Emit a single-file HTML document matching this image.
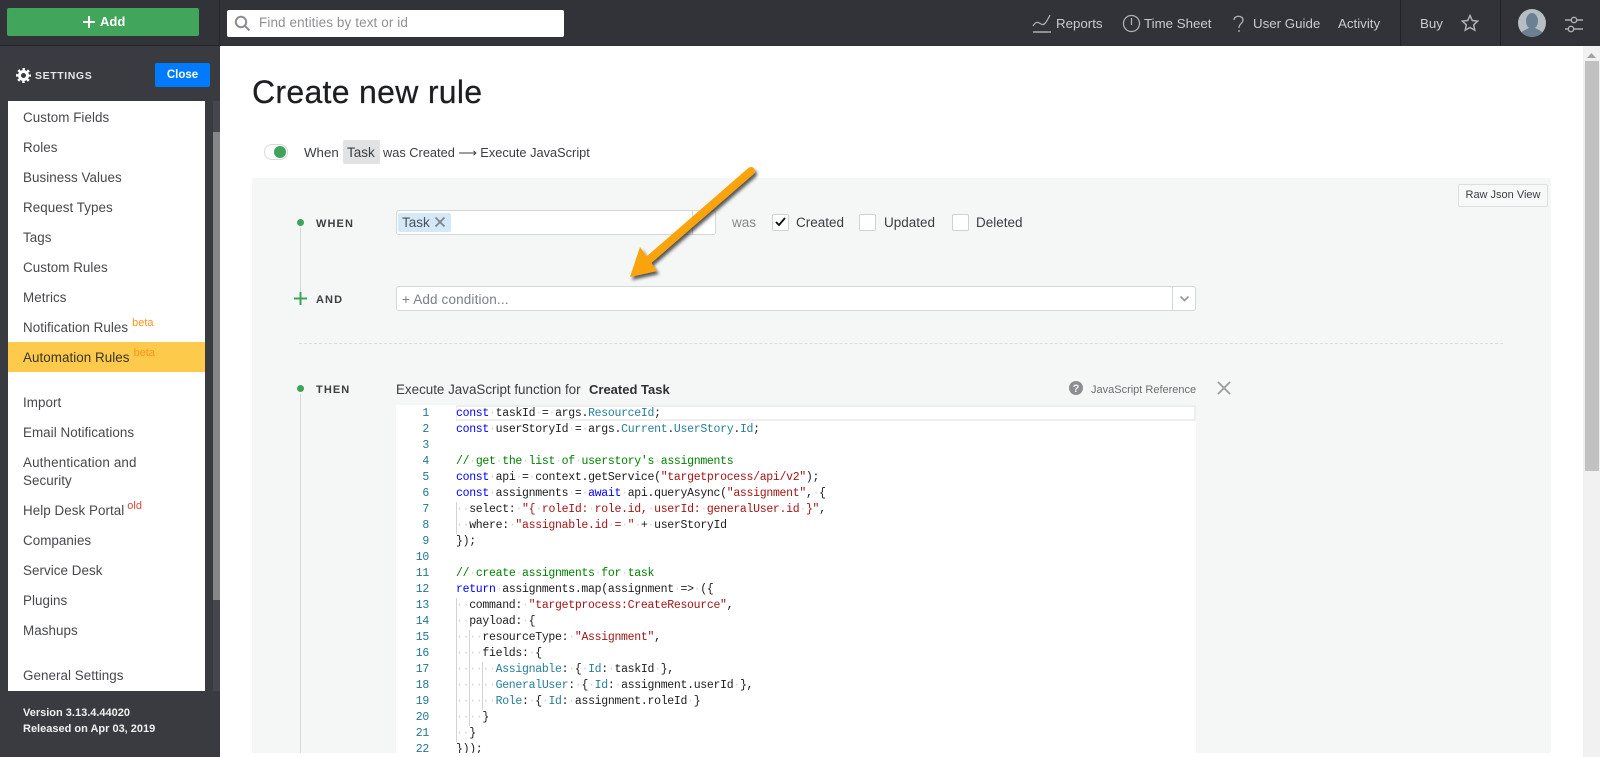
<!DOCTYPE html>
<html><head><meta charset="utf-8"><title>Create new rule</title>
<style>
html,body{margin:0;padding:0;width:1600px;height:757px;overflow:hidden;background:#fff}
body{position:relative;font-family:"Liberation Sans",sans-serif;font-size:13.5px;color:#3b3d42}
.a{position:absolute}
.t{position:absolute;white-space:nowrap;line-height:18px;height:18px}
.nav{color:#c9cbcf;font-size:13.3px}
.m{color:#46484c;left:23px;font-size:13.4px;letter-spacing:.05px}
.m sup{font-size:11px;color:#f7941d;position:relative;top:-6px;vertical-align:baseline;margin-left:4px;letter-spacing:0}
.lbl{font-size:11px;font-weight:bold;letter-spacing:1.1px;color:#3c3e42}
.in{position:absolute;background:#fff;border:1px solid #d5d8d9;border-radius:3px;box-sizing:border-box}
.cb{position:absolute;width:17px;height:17px;box-sizing:border-box;background:#fff;border:1px solid #cfd2d3;border-radius:2px}
#code{position:absolute;left:396px;top:405px;width:800px;height:348px;background:#fff;overflow:hidden;font-family:"Liberation Mono",monospace;font-size:11.5px;letter-spacing:-.3px;line-height:16px;color:#1c1c1c}
#code .n{position:absolute;left:0;width:33px;text-align:right;color:#237893;height:16px;margin-top:1px}
#code .l{position:absolute;left:60px;white-space:pre;height:16px;margin-top:1px}
#code i{font-style:normal;color:#d2d2d2}
.k{color:#0000ff}.s{color:#a31515}.c{color:#008000}.p{color:#267f99}
.g{position:absolute;width:1px;background:#d3d3d3}
</style></head><body>

<div class="a" style="left:0;top:0;width:1600px;height:46px;background:#313338"></div>
<div class="a" style="left:0;top:46px;width:220px;height:711px;background:#3a3b40"></div>
<div class="a" style="left:219px;top:0;width:1px;height:46px;background:#25262a"></div>
<div class="a" style="left:0;top:45px;width:220px;height:1px;background:#25262a"></div>

<div class="a" style="left:7px;top:8px;width:192px;height:28px;background:#41a55c;border-radius:2px"></div>
<svg class="a" style="left:82px;top:15px" width="14" height="14"><path d="M7 1v12M1 7h12" stroke="#fff" stroke-width="2"/></svg>
<div class="t" style="left:100px;top:13px;color:#fff;font-weight:bold;font-size:13px">Add</div>

<div class="a" style="left:227px;top:10px;width:337px;height:27px;background:#fff;border-radius:2px"></div>
<svg class="a" style="left:234px;top:15px" width="17" height="17" fill="none" stroke="#8b8d90" stroke-width="2"><circle cx="7" cy="7" r="5.2"/><path d="M11 11l4.500 4.500"/></svg>
<div class="t" style="left:259px;top:14px;color:#8e9094;font-size:13.5px;letter-spacing:.1px">Find entities by text or id</div>

<svg class="a" style="left:1032px;top:14px" width="20" height="20" fill="none" stroke="#aeb0b4" stroke-width="1.300"><path d="M1 12c3-5 5-4 8-2s5-1 9-9"/><path d="M1 18h18" stroke-width="1.600"/></svg>
<div class="t nav" style="left:1056px;top:15px">Reports</div>
<svg class="a" style="left:1122px;top:14px" width="19" height="19" fill="none" stroke="#aeb0b4" stroke-width="1.300"><circle cx="9.500" cy="9.500" r="8"/><path d="M9.500 4v7"/></svg>
<div class="t nav" style="left:1144px;top:15px">Time Sheet</div>
<svg class="a" style="left:1233px;top:15px" width="12" height="20" fill="none" stroke="#aeb0b4" stroke-width="1.300"><path d="M1 5c0-5 9-5 9 0 0 3.500-4 3.500-4 8"/><path d="M6 15v2"/></svg>
<div class="t nav" style="left:1253px;top:15px">User Guide</div>
<div class="t nav" style="left:1338px;top:15px">Activity</div>
<div class="a" style="left:1400px;top:0;width:1px;height:46px;background:#222327"></div>
<div class="t nav" style="left:1420px;top:15px">Buy</div>
<svg class="a" style="left:1461px;top:14px" width="18" height="18" fill="none" stroke="#aeb0b4" stroke-width="1.500"><path d="M9 1.500l2.300 5 5.400.6-4 3.700 1.100 5.400L9 13.500l-4.800 2.700 1.100-5.400-4-3.700 5.400-.6z"/></svg>
<div class="a" style="left:1500px;top:0;width:1px;height:46px;background:#222327"></div>
<svg class="a" style="left:1518px;top:9px" width="28" height="28"><defs><clipPath id="av"><circle cx="14" cy="14" r="14"/></clipPath></defs><circle cx="14" cy="14" r="14" fill="#b6bdc3"/><g clip-path="url(#av)" fill="#6b8193"><ellipse cx="14" cy="12" rx="6" ry="8"/><path d="M1 28c1-5 6-7 10-9h6c4 2 9 4 10 9z"/></g></svg>
<svg class="a" style="left:1565px;top:14px" width="18" height="20" fill="none" stroke="#aeb0b4" stroke-width="1.400"><path d="M0 6h6M12 6h6M0 15h3M9 15h9"/><circle cx="9" cy="6" r="2.700"/><circle cx="6" cy="15" r="2.700"/></svg>

<svg class="a" style="left:16px;top:68px" width="15" height="15" viewBox="0 0 15 15" fill="none" stroke="#fff"><circle cx="7.500" cy="7.500" r="4" stroke-width="3"/><circle cx="7.500" cy="7.500" r="6.200" stroke-width="2.600" stroke-dasharray="2.400 2.470" stroke-dashoffset="1.200"/></svg>
<div class="t" style="left:35px;top:67px;color:#e4e5e7;font-size:10.5px;font-weight:bold;letter-spacing:.6px">SETTINGS</div>
<div class="a" style="left:155px;top:63px;width:55px;height:24px;background:#007bff;border-radius:2px;color:#fff;font-size:11.5px;font-weight:bold;text-align:center;line-height:24px">Close</div>

<div class="a" style="left:8px;top:101px;width:197px;height:590px;background:#fff"></div>
<div class="a" style="left:8px;top:342px;width:197px;height:30px;background:#fdca4b"></div>
<div class="a" style="left:213px;top:101px;width:7px;height:590px;background:#46474c"></div>
<div class="a" style="left:213px;top:132px;width:7px;height:468px;background:#868688"></div>

<div class="t m" style="top:109px">Custom Fields</div>
<div class="t m" style="top:139px">Roles</div>
<div class="t m" style="top:169px">Business Values</div>
<div class="t m" style="top:199px">Request Types</div>
<div class="t m" style="top:229px">Tags</div>
<div class="t m" style="top:259px">Custom Rules</div>
<div class="t m" style="top:289px">Metrics</div>
<div class="t m" style="top:319px">Notification Rules<sup>beta</sup></div>
<div class="t m" style="top:349px;color:#3a3520">Automation Rules<sup>beta</sup></div>
<div class="t m" style="top:394px">Import</div>
<div class="t m" style="top:424px">Email Notifications</div>
<div class="t m" style="top:454px;letter-spacing:.15px">Authentication and</div>
<div class="t m" style="top:472px">Security</div>
<div class="t m" style="top:502px">Help Desk Portal<sup style="color:#e0453a;margin-left:3px">old</sup></div>
<div class="t m" style="top:532px">Companies</div>
<div class="t m" style="top:562px">Service Desk</div>
<div class="t m" style="top:592px">Plugins</div>
<div class="t m" style="top:622px">Mashups</div>
<div class="t m" style="top:667px">General Settings</div>
<div class="t" style="left:23px;top:704px;color:#f0f0f1;font-size:11px;font-weight:bold">Version 3.13.4.44020</div>
<div class="t" style="left:23px;top:720px;color:#f0f0f1;font-size:11px;font-weight:bold">Released on Apr 03, 2019</div>

<div class="t" style="left:252px;top:72px;height:40px;line-height:40px;font-size:32px;color:#1d1e21;letter-spacing:.3px;-webkit-text-stroke:.25px #1d1e21">Create new rule</div>

<div class="a" style="left:264px;top:144px;width:24px;height:16px;box-sizing:border-box;background:#fff;border:1px solid #d8dadb;border-radius:8px"></div>
<div class="a" style="left:274px;top:146px;width:12px;height:12px;border-radius:50%;background:#3ea558"></div>
<div class="t" style="left:304px;top:144px;font-size:13.3px">When</div>
<div class="a" style="left:343px;top:140px;width:37px;height:24px;background:#e1e2e4;border-radius:2px"></div>
<div class="t" style="left:347px;top:144px">Task</div>
<div class="t" style="left:383px;top:144px;font-size:12.8px">was Created ⟶ Execute JavaScript</div>

<div class="a" style="left:252px;top:178px;width:1299px;height:575px;background:#f5f7f6;border-radius:2px"></div>
<div class="a" style="left:1458px;top:184px;width:90px;height:23px;box-sizing:border-box;border:1px solid #dcdfdf;background:#f7f8f8;border-radius:2px;font-size:11px;text-align:center;line-height:21px;color:#3b3d42">Raw Json View</div>

<div class="a" style="left:300px;top:228px;width:1px;height:64px;background:#d6d8d8"></div>
<div class="a" style="left:297px;top:219px;width:7px;height:7px;border-radius:50%;background:#3ea558"></div>
<div class="t lbl" style="left:316px;top:215px">WHEN</div>
<div class="in" style="left:396px;top:210px;width:320px;height:25px"></div>
<div class="a" style="left:692px;top:211px;width:1px;height:23px;background:#d5d8d9"></div>
<div class="a" style="left:398px;top:213px;width:53px;height:19px;background:#d3e9f8;border-radius:2px"></div>
<div class="t" style="left:402px;top:214px;color:#4d5157">Task</div>
<svg class="a" style="left:434px;top:216px" width="12" height="12" stroke="#7f8488" stroke-width="1.800"><path d="M1.500 1.500l9 9M10.500 1.500l-9 9"/></svg>
<div class="t" style="left:732px;top:214px;color:#85888b">was</div>
<div class="cb" style="left:772px;top:214px"></div>
<svg class="a" style="left:775px;top:217px" width="12" height="10" fill="none" stroke="#111" stroke-width="1.800"><path d="M1 5l3 3 6-7"/></svg>
<div class="t" style="left:796px;top:214px">Created</div>
<div class="cb" style="left:859px;top:214px"></div>
<div class="t" style="left:884px;top:214px">Updated</div>
<div class="cb" style="left:952px;top:214px"></div>
<div class="t" style="left:976px;top:214px">Deleted</div>

<svg class="a" style="left:294px;top:292px" width="13" height="13" stroke="#3ea558" stroke-width="2"><path d="M6.500 0v13M0 6.500h13"/></svg>
<div class="t lbl" style="left:316px;top:291px">AND</div>
<div class="in" style="left:396px;top:286px;width:800px;height:25px"></div>
<div class="a" style="left:1172px;top:287px;width:1px;height:23px;background:#d5d8d9"></div>
<svg class="a" style="left:1179px;top:295px" width="11" height="8" fill="none" stroke="#9a9da0" stroke-width="1.800"><path d="M1.500 1.500l4 4 4-4"/></svg>
<div class="t" style="left:402px;top:291px;color:#7d8084;letter-spacing:.15px">+ Add condition...</div>

<div class="a" style="left:299px;top:343px;width:1204px;height:0;border-top:1px dashed #dcdedd"></div>

<div class="a" style="left:300px;top:394px;width:1px;height:359px;background:#d6d8d8"></div>
<div class="a" style="left:297px;top:385px;width:7px;height:7px;border-radius:50%;background:#3ea558"></div>
<div class="t lbl" style="left:316px;top:381px">THEN</div>
<div class="t" style="left:396px;top:381px;font-size:13.4px">Execute JavaScript function for</div>
<div class="t" style="left:589px;top:381px;font-weight:bold;color:#2f3135;font-size:13px">Created Task</div>
<svg class="a" style="left:1069px;top:381px" width="14" height="14"><circle cx="7" cy="7" r="7" fill="#8c8e91"/><text x="7" y="11" text-anchor="middle" font-size="11" font-weight="bold" fill="#f4f6f5" font-family="Liberation Sans">?</text></svg>
<div class="t" style="left:1091px;top:381px;font-size:11px;color:#6b6e72">JavaScript Reference</div>
<svg class="a" style="left:1217px;top:381px" width="14" height="14" stroke="#9b9d9f" stroke-width="1.800"><path d="M1 1l12 12M13 1L1 13"/></svg>

<div id="code">
<div class="a" style="left:60px;top:0;width:740px;height:16px;box-sizing:border-box;border:2px solid #eeeeee;border-left-width:1px"></div>
<div class="g" style="left:60px;top:97px;height:32px"></div>
<div class="g" style="left:60px;top:193px;height:144px"></div>
<div class="g" style="left:73px;top:225px;height:96px"></div>
<div class="g" style="left:86px;top:257px;height:48px"></div>
<div class="n" style="top:0">1</div><div class="l" style="top:0"><span class="k">const</span><i>·</i>taskId<i>·</i>=<i>·</i>args.<span class="p">ResourceId</span>;</div>
<div class="n" style="top:16px">2</div><div class="l" style="top:16px"><span class="k">const</span><i>·</i>userStoryId<i>·</i>=<i>·</i>args.<span class="p">Current</span>.<span class="p">UserStory</span>.<span class="p">Id</span>;</div>
<div class="n" style="top:32px">3</div>
<div class="n" style="top:48px">4</div><div class="l c" style="top:48px">//<i>·</i>get<i>·</i>the<i>·</i>list<i>·</i>of<i>·</i>userstory's<i>·</i>assignments</div>
<div class="n" style="top:64px">5</div><div class="l" style="top:64px"><span class="k">const</span><i>·</i>api<i>·</i>=<i>·</i>context.getService(<span class="s">"targetprocess/api/v2"</span>);</div>
<div class="n" style="top:80px">6</div><div class="l" style="top:80px"><span class="k">const</span><i>·</i>assignments<i>·</i>=<i>·</i><span class="k">await</span><i>·</i>api.queryAsync(<span class="s">"assignment"</span>,<i>·</i>{</div>
<div class="n" style="top:96px">7</div><div class="l" style="top:96px"><i>··</i>select:<i>·</i><span class="s">"{<i>·</i>roleId:<i>·</i>role.id,<i>·</i>userId:<i>·</i>generalUser.id<i>·</i>}"</span>,</div>
<div class="n" style="top:112px">8</div><div class="l" style="top:112px"><i>··</i>where:<i>·</i><span class="s">"assignable.id<i>·</i>=<i>·</i>"</span><i>·</i>+<i>·</i>userStoryId</div>
<div class="n" style="top:128px">9</div><div class="l" style="top:128px">});</div>
<div class="n" style="top:144px">10</div>
<div class="n" style="top:160px">11</div><div class="l c" style="top:160px">//<i>·</i>create<i>·</i>assignments<i>·</i>for<i>·</i>task</div>
<div class="n" style="top:176px">12</div><div class="l" style="top:176px"><span class="k">return</span><i>·</i>assignments.map(assignment<i>·</i>=&gt;<i>·</i>({</div>
<div class="n" style="top:192px">13</div><div class="l" style="top:192px"><i>··</i>command:<i>·</i><span class="s">"targetprocess:CreateResource"</span>,</div>
<div class="n" style="top:208px">14</div><div class="l" style="top:208px"><i>··</i>payload:<i>·</i>{</div>
<div class="n" style="top:224px">15</div><div class="l" style="top:224px"><i>····</i>resourceType:<i>·</i><span class="s">"Assignment"</span>,</div>
<div class="n" style="top:240px">16</div><div class="l" style="top:240px"><i>····</i>fields:<i>·</i>{</div>
<div class="n" style="top:256px">17</div><div class="l" style="top:256px"><i>······</i><span class="p">Assignable</span>:<i>·</i>{<i>·</i><span class="p">Id</span>:<i>·</i>taskId<i>·</i>},</div>
<div class="n" style="top:272px">18</div><div class="l" style="top:272px"><i>······</i><span class="p">GeneralUser</span>:<i>·</i>{<i>·</i><span class="p">Id</span>:<i>·</i>assignment.userId<i>·</i>},</div>
<div class="n" style="top:288px">19</div><div class="l" style="top:288px"><i>······</i><span class="p">Role</span>:<i>·</i>{<i>·</i><span class="p">Id</span>:<i>·</i>assignment.roleId<i>·</i>}</div>
<div class="n" style="top:304px">20</div><div class="l" style="top:304px"><i>····</i>}</div>
<div class="n" style="top:320px">21</div><div class="l" style="top:320px"><i>··</i>}</div>
<div class="n" style="top:336px">22</div><div class="l" style="top:336px">}));</div>
</div>

<svg class="a" style="left:620px;top:160px" width="150" height="130">
<defs><filter id="sh" x="-20%" y="-20%" width="140%" height="140%"><feDropShadow dx="2" dy="3" stdDeviation="1.500" flood-color="#000" flood-opacity=".65"/></filter></defs>
<g filter="url(#sh)"><path d="M131 11L24 104" stroke="#f9a40c" stroke-width="8" stroke-linecap="round" fill="none"/><path d="M10 117L20 87 37 111z" fill="#f9a40c"/></g>
</svg>

<div class="a" style="left:1583px;top:46px;width:17px;height:711px;background:#f1f1f1"></div>
<div class="a" style="left:1585px;top:61px;width:14px;height:410px;background:#c1c1c1"></div>
<svg class="a" style="left:1587px;top:53px" width="9" height="6"><path d="M4.500 0L9 5H0z" fill="#a3a3a3"/></svg>
</body></html>
